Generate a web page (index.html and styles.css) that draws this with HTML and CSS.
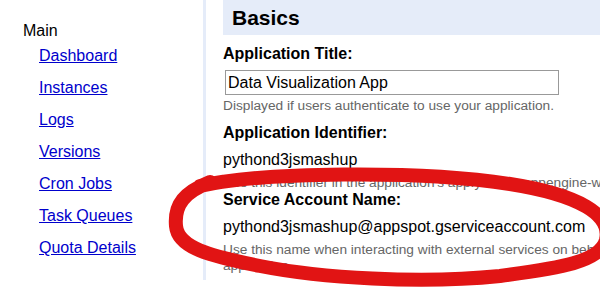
FILE: index.html
```html
<!DOCTYPE html>
<html lang="en">
<head>
  <meta charset="UTF-8">
  <title>Application Settings</title>
  <link rel="stylesheet" href="styles.css">
</head>
<body>

<div class="page">
  <div class="sidebar">
    <div class="nav-title">Main</div>
    <ul class="nav">
      <li><a href="#">Dashboard</a></li>
      <li><a href="#">Instances</a></li>
      <li><a href="#">Logs</a></li>
      <li><a href="#">Versions</a></li>
      <li><a href="#">Cron Jobs</a></li>
      <li><a href="#">Task Queues</a></li>
      <li><a href="#">Quota Details</a></li>
    </ul>
  </div>

  <div class="content">
    <h2 class="section">Basics</h2>

    <div class="label first">Application Title:</div>
    <input class="field" type="text" value="Data Visualization App">
    <div class="hint hint-title">Displayed if users authenticate to use your application.</div>

    <div class="label">Application Identifier:</div>
    <div class="value">pythond3jsmashup</div>
    <div class="hint hint-id">Use this identifier in the application's app.yaml or appengine-web.xml file.</div>

    <div class="label label-tight">Service Account Name:</div>
    <div class="value">pythond3jsmashup@appspot.gserviceaccount.com</div>
    <div class="hint hint-id">Use this name when interacting with external services on behalf of your application.</div>
  </div>
</div>

<!-- hand drawn marker circle over the service account -->
<svg class="scribble" width="600" height="300" viewBox="0 0 600 300">
  <path d="M 200 186 C 260 172 420 170 510 184 C 580 195 612 215 606 240 C 600 262 560 268 500 276 C 420 284 320 278 260 266 C 210 256 178 248 176 226 C 174 204 185 192 210 182"
        fill="none" stroke="#e11414" stroke-width="14" stroke-linecap="round" stroke-linejoin="round"/>
</svg>

</body>
</html>
```

FILE: styles.css
```css
body {
  margin: 0;
  padding: 0;
  font-family: 'Liberation Sans', Arial, sans-serif;
  font-size: 16px;
  color: black;
  background: white;
  overflow: hidden;
}

.page {
  display: flex;
  align-items: flex-start;
}

.sidebar {
  width: 203px;
  height: 280px;
  border-right: 3px solid #e5ecf9;
  flex-shrink: 0;
}

.nav-title {
  margin: 22px 0 0 23px;
  line-height: 18px;
}

.nav {
  list-style: none;
  margin: 0 0 0 39px;
  padding: 0;
}

.nav li {
  line-height: 32px;
}

.nav a {
  color: #0000cc;
}

.content {
  padding-left: 17px;
  width: 500px;
  flex-shrink: 0;
}

.section {
  margin: 0;
  height: 35px;
  line-height: 35px;
  padding-left: 9px;
  font-size: 21px;
  font-weight: bold;
  background-color: #e5ecf9;
}

.label {
  font-weight: bold;
  line-height: 18px;
  margin-top: 10px;
}

.label-tight {
  margin-top: 0;
}

.field {
  display: block;
  box-sizing: border-box;
  margin: 7px 0 0 2px;
  width: 334px;
  height: 25px;
  padding: 0 2px;
  font-family: 'Liberation Sans', Arial, sans-serif;
  font-size: 16px;
  color: black;
  border: 1px solid #999;
  outline: none;
}

.value {
  line-height: 18px;
  margin-top: 9px;
}

.hint {
  font-size: 13.7px;
  line-height: 16px;
  color: #666;
}

.hint-title {
  margin-top: 3px;
}

.hint-id {
  margin-top: 6px;
}

.scribble {
  position: absolute;
  top: 0;
  left: 0;
  pointer-events: none;
}
```
